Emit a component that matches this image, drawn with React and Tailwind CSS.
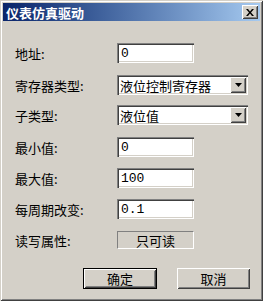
const font = { fontFamily: '"Noto Sans CJK SC", "Liberation Sans", sans-serif' };

const sunken =
  "shadow-[inset_1px_1px_0_#808080,inset_2px_2px_0_#404040,inset_-1px_-1px_0_#ffffff,inset_-2px_-2px_0_#d4d0c8]";
const raised =
  "shadow-[inset_1px_1px_0_#ffffff,inset_-1px_-1px_0_#404040,inset_2px_2px_0_#d4d0c8,inset_-2px_-2px_0_#808080]";

function Label({ children }) {
  return <div className="w-[102px] text-[13px] leading-none text-black">{children}</div>;
}

function TextBox({ value }) {
  return (
    <div className={`w-[77px] h-[20px] bg-white ${sunken} flex items-center pl-[4px]`}>
      <span className="text-[13px] leading-none text-black font-['Liberation_Mono',monospace]">{value}</span>
    </div>
  );
}

function Combo({ value }) {
  return (
    <div className={`w-[131px] h-[20px] bg-white ${sunken} flex items-center pl-[3px] pr-[2px]`}>
      <span className="flex-1 text-[13px] leading-none text-black">{value}</span>
      <div className={`w-[16px] h-[16px] bg-[#d4d0c8] ${raised} flex items-center justify-center`}>
        <svg width="7" height="4" viewBox="0 0 7 4">
          <path d="M0 0h7L3.5 4z" fill="#000" />
        </svg>
      </div>
    </div>
  );
}

function Row({ label, children, className = "" }) {
  return (
    <div className={`flex items-center h-[20px] ${className}`}>
      <Label>{label}</Label>
      {children}
    </div>
  );
}

export default function App() {
  return (
    <div
      style={font}
      className="relative w-[263px] h-[301px] bg-[#d4d0c8] shadow-[inset_1px_1px_0_#d4d0c8,inset_-1px_-1px_0_#404040,inset_2px_2px_0_#ffffff,inset_-2px_-2px_0_#808080] flex flex-col"
    >
      <div className="mx-[3px] mt-[3px] h-[18px] bg-gradient-to-r from-[#0a246a] to-[#a6caf0] flex items-center pl-[3px] pr-[2px]">
        <span className="flex-1 text-white text-[13px] font-bold leading-none">仪表仿真驱动</span>
        <div className={`w-[16px] h-[14px] bg-[#d4d0c8] ${raised} flex items-center justify-center`}>
          <svg width="8" height="7" viewBox="0 0 8 7">
            <path d="M0 0h2l2 2.5L6 0h2L5 3.5 8 7H6L4 4.5 2 7H0l3-3.5z" fill="#000" />
          </svg>
        </div>
      </div>

      <div className="flex flex-col pl-[15px]">
        <Row label="地址:" className="mt-[22px]">
          <TextBox value="0" />
        </Row>
        <Row label="寄存器类型:" className="mt-[12px]">
          <Combo value="液位控制寄存器" />
        </Row>
        <Row label="子类型:" className="mt-[10px]">
          <Combo value="液位值" />
        </Row>
        <Row label="最小值:" className="mt-[12px]">
          <TextBox value="0" />
        </Row>
        <Row label="最大值:" className="mt-[11px]">
          <TextBox value="100" />
        </Row>
        <Row label="每周期改变:" className="mt-[11px]">
          <TextBox value="0.1" />
        </Row>
        <Row label="读写属性:" className="mt-[11px]">
          <div className="w-[77px] h-[18px] border border-t-[#808080] border-l-[#808080] border-b-white border-r-white flex items-center justify-center text-[13px] leading-none text-black">
            只可读
          </div>
        </Row>
      </div>

      <div className="flex mt-[18px] pl-[83px] gap-[20px]">
        <div className="w-[74px] h-[21px] border border-black">
          <div className={`w-full h-full ${raised} flex items-center justify-center text-[13px] leading-none text-black`}>
            确定
          </div>
        </div>
        <div className={`w-[73px] h-[21px] ${raised} flex items-center justify-center text-[13px] leading-none text-black`}>
          取消
        </div>
      </div>
    </div>
  );
}
